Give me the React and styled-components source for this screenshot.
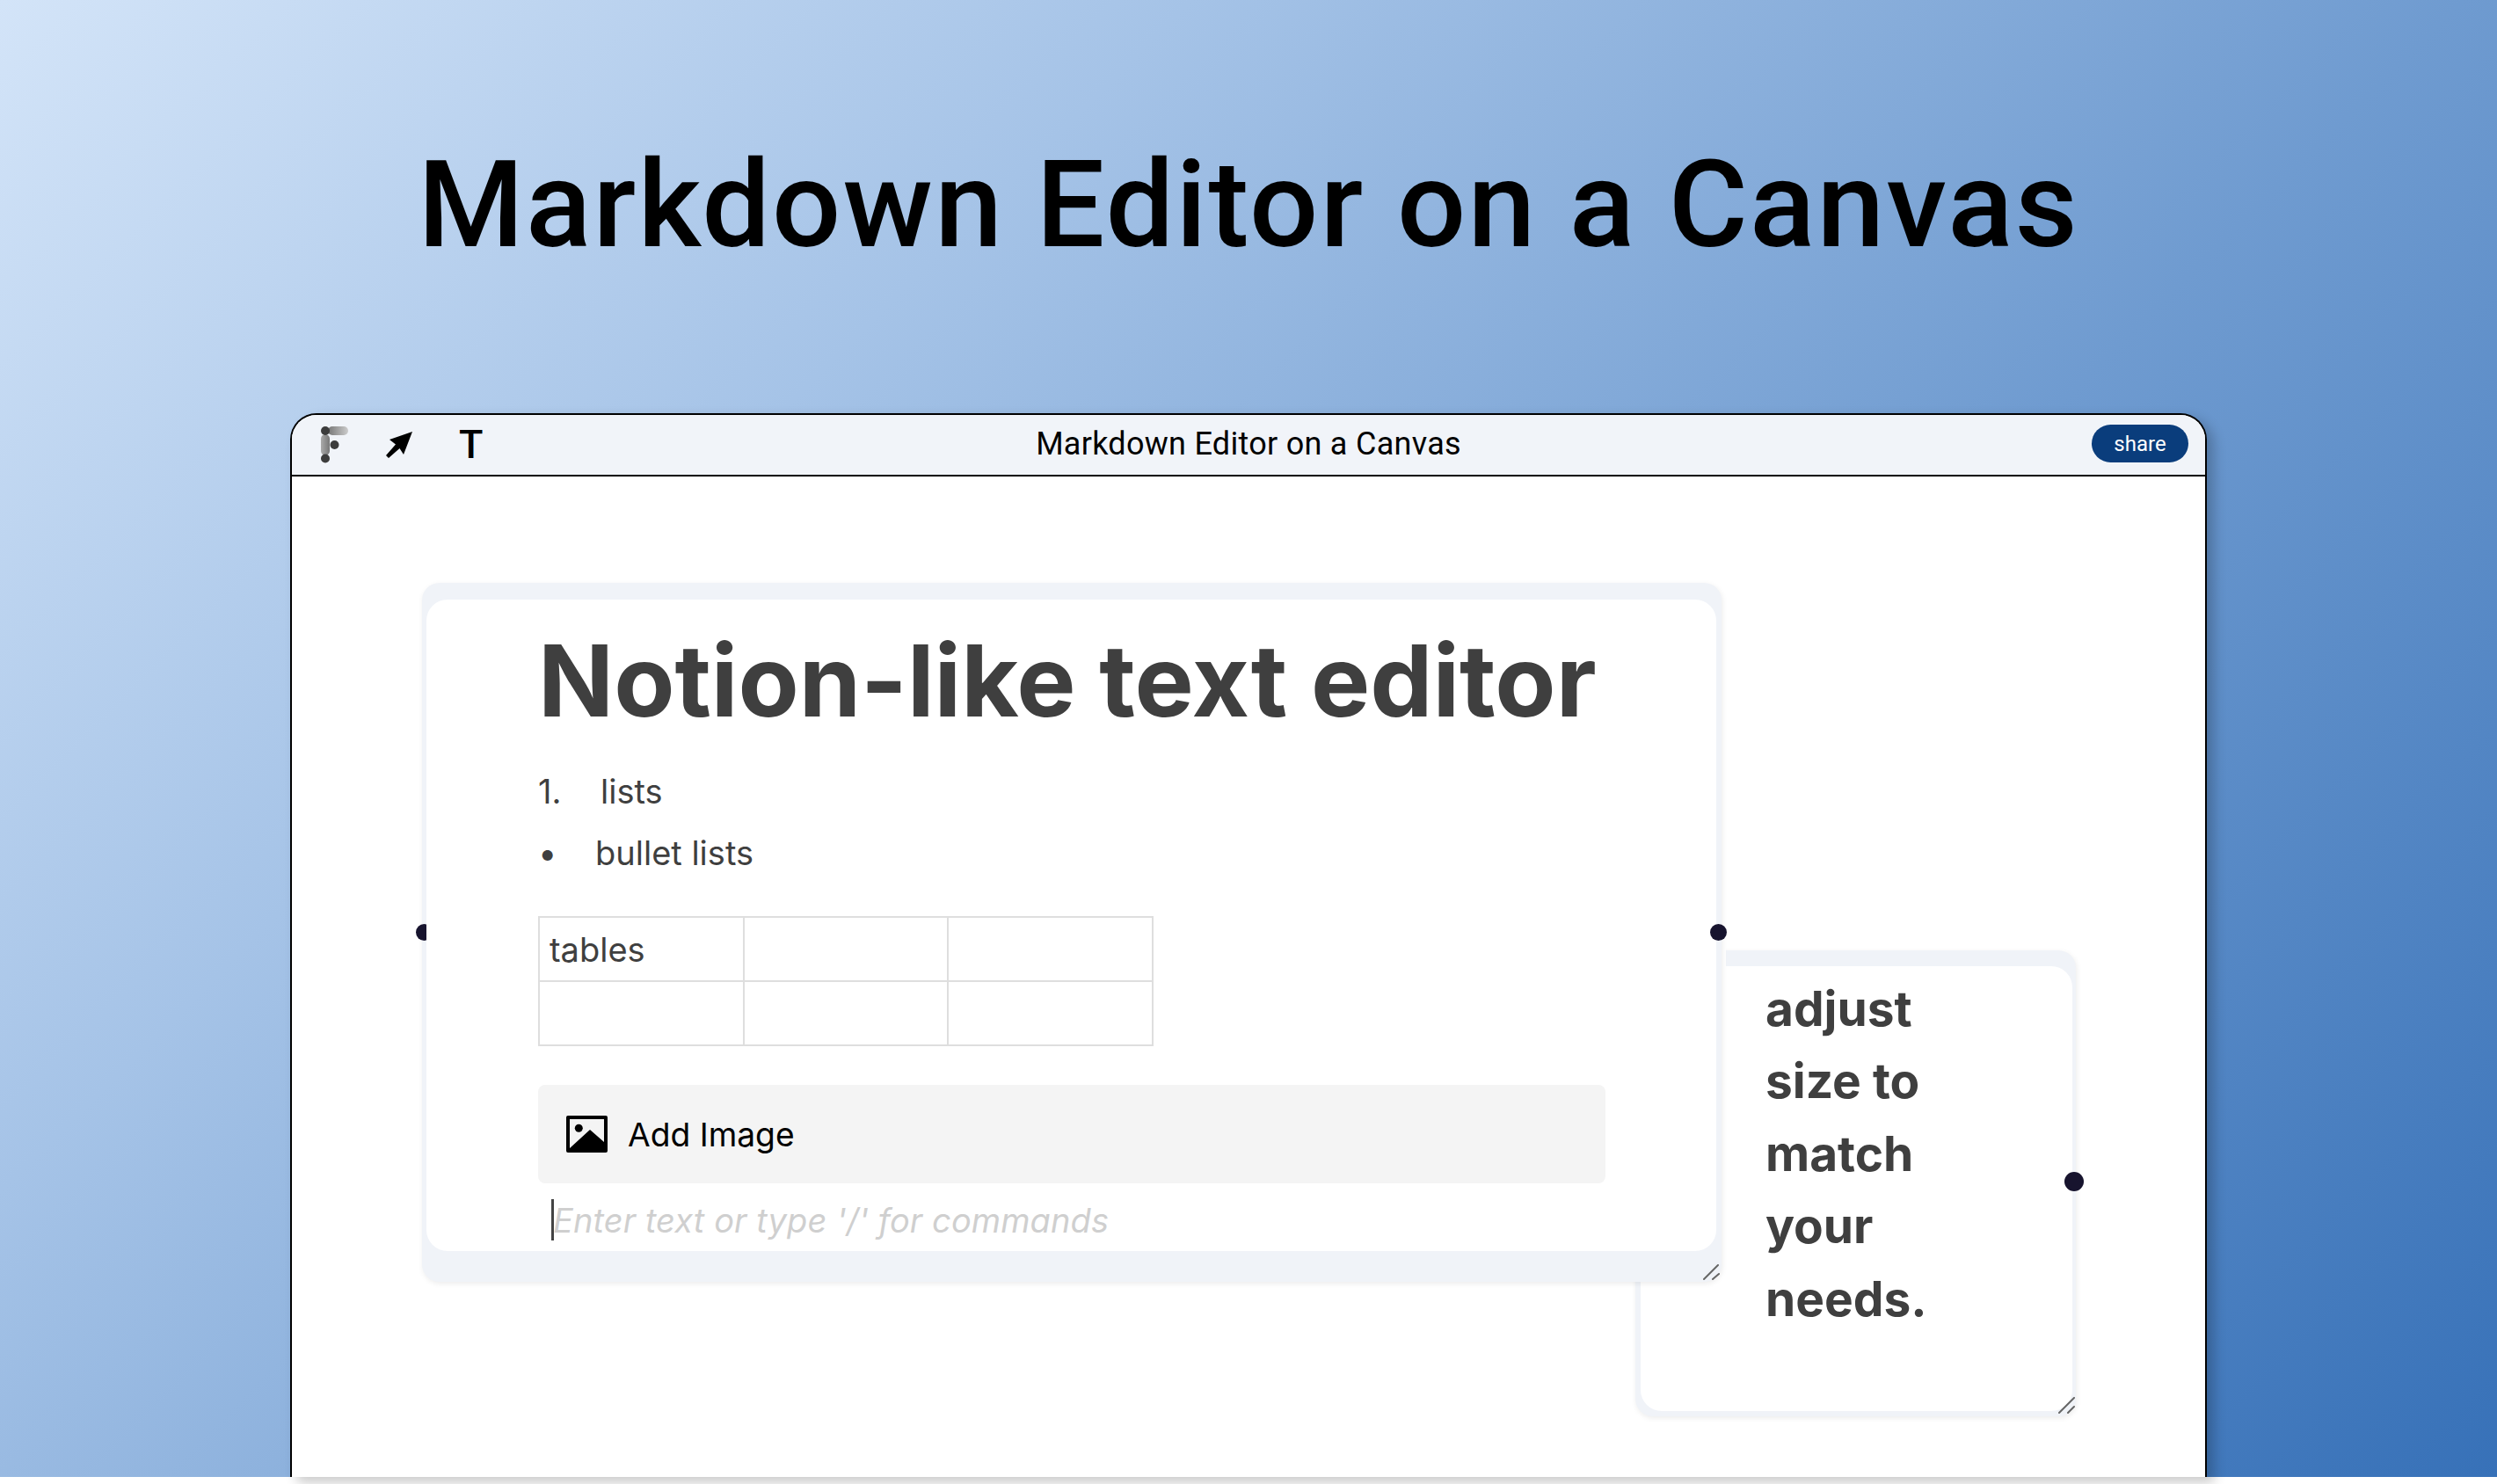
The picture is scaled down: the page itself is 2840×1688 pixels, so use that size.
import React from "react";
import styled, { createGlobalStyle } from "styled-components";

const Global = createGlobalStyle`
  html, body { margin: 0; padding: 0; background: #fff; }
  body { font-family: Inter, "Liberation Sans", sans-serif; }
  * { box-sizing: border-box; }
`;

const Page = styled.div`
  width: 2840px;
  height: 1688px;
  overflow: hidden;
  background: #fff;
`;
const Hero = styled.main`
  height: 1680px;
  padding-top: 161px;
  display: flex;
  flex-direction: column;
  align-items: center;
  background: linear-gradient(135deg, #d3e4f8 0%, #a5c3e7 30%, #6f9bd0 62%, #3771b8 100%);
`;
const Title = styled.h1`
  margin: 0;
  height: 144px;
  font-family: Roboto, sans-serif;
  font-weight: 500;
  font-size: 138px;
  line-height: 144px;
  letter-spacing: 2.15px;
  white-space: nowrap;
  color: #000;
`;
const Window = styled.section`
  margin-top: 165px;
  width: 2180px;
  height: 1210px;
  display: flex;
  flex-direction: column;
  background: #fff;
  border: solid #000;
  border-width: 2px 2px 0 2px;
  border-radius: 30px 30px 0 0;
  box-shadow: 8px 6px 14px rgba(0, 0, 0, 0.22);
`;
const TitleBar = styled.header`
  height: 70px;
  flex: none;
  display: grid;
  grid-template-columns: 1fr auto 1fr;
  align-items: center;
  padding: 0 19px;
  background: #f1f4f9;
  border-bottom: 2px solid #000;
  border-radius: 28px 28px 0 0;
`;
const Tools = styled.div`
  display: flex;
  align-items: center;
  gap: 42px;
  padding-left: 14px;
`;
const ToolText = styled.span`
  font-family: Roboto, sans-serif;
  font-weight: 500;
  font-size: 45px;
  line-height: 50px;
  color: #000;
  margin-left: 11px;
`;
const DocName = styled.div`
  font-family: Roboto, sans-serif;
  font-size: 36px;
  line-height: 40px;
  letter-spacing: 0.28px;
  color: #000;
  white-space: nowrap;
  padding-bottom: 2px;
`;
const Right = styled.div`
  display: flex;
  justify-content: flex-end;
  padding-bottom: 3px;
`;
const Share = styled.button`
  width: 110px;
  height: 43px;
  border: 0;
  border-radius: 22px;
  background: #0a3d7c;
  color: #fff;
  font-family: Roboto, sans-serif;
  font-size: 24px;
  padding: 0;
`;
const Canvas = styled.div`
  flex: 1;
  position: relative;
`;
const Card = styled.article`
  position: absolute;
  left: ${(p) => p.$x}px;
  top: ${(p) => p.$y}px;
  width: ${(p) => p.$w}px;
  height: ${(p) => p.$h}px;
  z-index: ${(p) => p.$z};
  padding: ${(p) => p.$pad};
  background: #f0f3f8;
  border-radius: 20px;
  box-shadow: 1px 2px 6px rgba(0, 0, 0, 0.08)${(p) => (p.$edge ? ", 5px 0 0 #fff" : "")};
`;
const Inner = styled.div`
  position: relative;
  height: 100%;
  background: #fff;
  border-radius: 24px;
  padding: ${(p) => p.$pad};
`;
const Dot = styled.span`
  position: absolute;
  width: ${(p) => p.$size}px;
  height: ${(p) => p.$size}px;
  border-radius: 50%;
  background: #17142e;
  left: ${(p) => p.$x}px;
  top: ${(p) => p.$y}px;
`;
const Handle = styled.svg`
  position: absolute;
  right: ${(p) => p.$r}px;
  bottom: ${(p) => p.$b}px;
  width: 20px;
  height: 20px;
`;
const Heading = styled.h2`
  margin: 0;
  font-size: 113px;
  line-height: 112px;
  font-weight: 700;
  color: #3f3f3f;
  white-space: nowrap;
`;
const Lists = styled.div`
  margin-top: 49px;
  display: flex;
  flex-direction: column;
  gap: 28px;
`;
const ListRow = styled.div`
  display: flex;
  font-size: 38px;
  line-height: 42px;
  color: #3f3f3f;
`;
const Marker = styled.span`
  width: ${(p) => p.$w}px;
  flex: none;
`;
const Grid = styled.table`
  margin-top: 51px;
  border-collapse: collapse;
  table-layout: fixed;
  width: 700px;
`;
const Cell = styled.td`
  height: 73px;
  border: 2px solid #dedede;
  padding: 0 11px;
  font-size: 38px;
  color: #3f3f3f;
`;
const AddImage = styled.div`
  margin-top: 44px;
  height: 112px;
  display: flex;
  align-items: center;
  gap: 23px;
  padding-left: 32px;
  background: #f4f4f4;
  border-radius: 8px;
  font-size: 37.2px;
  color: #000;
`;
const Placeholder = styled.div`
  position: relative;
  margin-top: 18px;
  padding-left: 17px;
  font-size: 38px;
  line-height: 48px;
  font-style: italic;
  letter-spacing: 0.1px;
  color: #cfcfcf;
  white-space: nowrap;
`;
const Caret = styled.span`
  position: absolute;
  left: 15px;
  top: 0;
  width: 3px;
  height: 47px;
  background: #444;
`;
const Note = styled.div`
  font-size: 55px;
  line-height: 82.4px;
  font-weight: 700;
  color: #3f3f3f;
`;

const Logo = () => (
  <svg width="32" height="42" viewBox="0 0 32 42">
    <defs>
      <linearGradient id="lg1" x1="0" x2="1" y1="0" y2="0">
        <stop offset="0" stopColor="#777" />
        <stop offset="1" stopColor="#ccc" />
      </linearGradient>
      <linearGradient id="lg2" x1="0" x2="1" y1="0" y2="0">
        <stop offset="0" stopColor="#aaa" />
        <stop offset="1" stopColor="#777" />
      </linearGradient>
    </defs>
    <rect x="8" y="0" width="23" height="10" rx="5" fill="url(#lg1)" />
    <rect x="0" y="9" width="10" height="24" rx="5" fill="url(#lg2)" />
    <circle cx="5" cy="5" r="5" fill="#3c3c3c" />
    <circle cx="15.5" cy="21" r="5" fill="#3c3c3c" />
    <circle cx="5" cy="36.5" r="5" fill="#3c3c3c" />
  </svg>
);
const Arrow = () => (
  <svg width="30" height="30" viewBox="0 0 30 30">
    <path d="M30 0 L20 26 L15.5 19 L3 30 L0 27 L11 14.5 L4 9 Z" fill="#000" />
  </svg>
);
const ImageIcon = () => (
  <svg width="47" height="42" viewBox="0 0 47 42">
    <path
      fillRule="evenodd"
      d="M2 0 H45 a2 2 0 0 1 2 2 V40 a2 2 0 0 1 -2 2 H2 a2 2 0 0 1 -2 -2 V2 a2 2 0 0 1 2 -2 Z M4 4 V37 L27 16 L43 30 V4 Z"
      fill="#000"
    />
    <circle cx="14.3" cy="14.3" r="4.5" fill="#000" />
  </svg>
);

export default function App() {
  return (
    <Page>
      <Global />
      <Hero>
        <Title>Markdown Editor on a Canvas</Title>
        <Window>
          <TitleBar>
            <Tools>
              <Logo />
              <Arrow />
              <ToolText>T</ToolText>
            </Tools>
            <DocName>Markdown Editor on a Canvas</DocName>
            <Right>
              <Share>share</Share>
            </Right>
          </TitleBar>
          <Canvas>
            <Card $x={148} $y={121} $w={1478} $h={795} $z={2} $edge $pad="19px 6px 35px 5px">
              <Dot $size={19} $x={-7} $y={388} />
              <Inner $pad="36px 126px 0 127px">
                <Heading>Notion-like text editor</Heading>
                <Lists>
                  <ListRow><Marker $w={71}>1.</Marker>lists</ListRow>
                  <ListRow><Marker $w={65}>•</Marker>bullet lists</ListRow>
                </Lists>
                <Grid>
                  <tbody>
                    <tr><Cell>tables</Cell><Cell /><Cell /></tr>
                    <tr><Cell /><Cell /><Cell /></tr>
                  </tbody>
                </Grid>
                <AddImage><ImageIcon />Add Image</AddImage>
                <Placeholder><Caret />Enter text or type '/' for commands</Placeholder>
              </Inner>
              <Dot $size={19} $x={1465} $y={388} />
              <Handle $r={1} $b={1} viewBox="0 0 20 20">
                <path d="M1 18 L17 2 M11 18 L18 12" stroke="#666" strokeWidth="2" strokeLinecap="round" fill="none" />
              </Handle>
            </Card>
            <Card $x={1528} $y={539} $w={501} $h={530} $z={1} $pad="18px 4px 6px 6px">
              <Inner $pad="7px 20px 0 142px">
                <Note>adjust<br />size to<br />match<br />your<br />needs.</Note>
              </Inner>
              <Dot $size={22} $x={488} $y={252} />
              <Handle $r={0} $b={2} viewBox="0 0 20 20">
                <path d="M1 18 L18 1 M11 18 L18 11" stroke="#666" strokeWidth="2" strokeLinecap="round" fill="none" />
              </Handle>
            </Card>
          </Canvas>
        </Window>
      </Hero>
    </Page>
  );
}
